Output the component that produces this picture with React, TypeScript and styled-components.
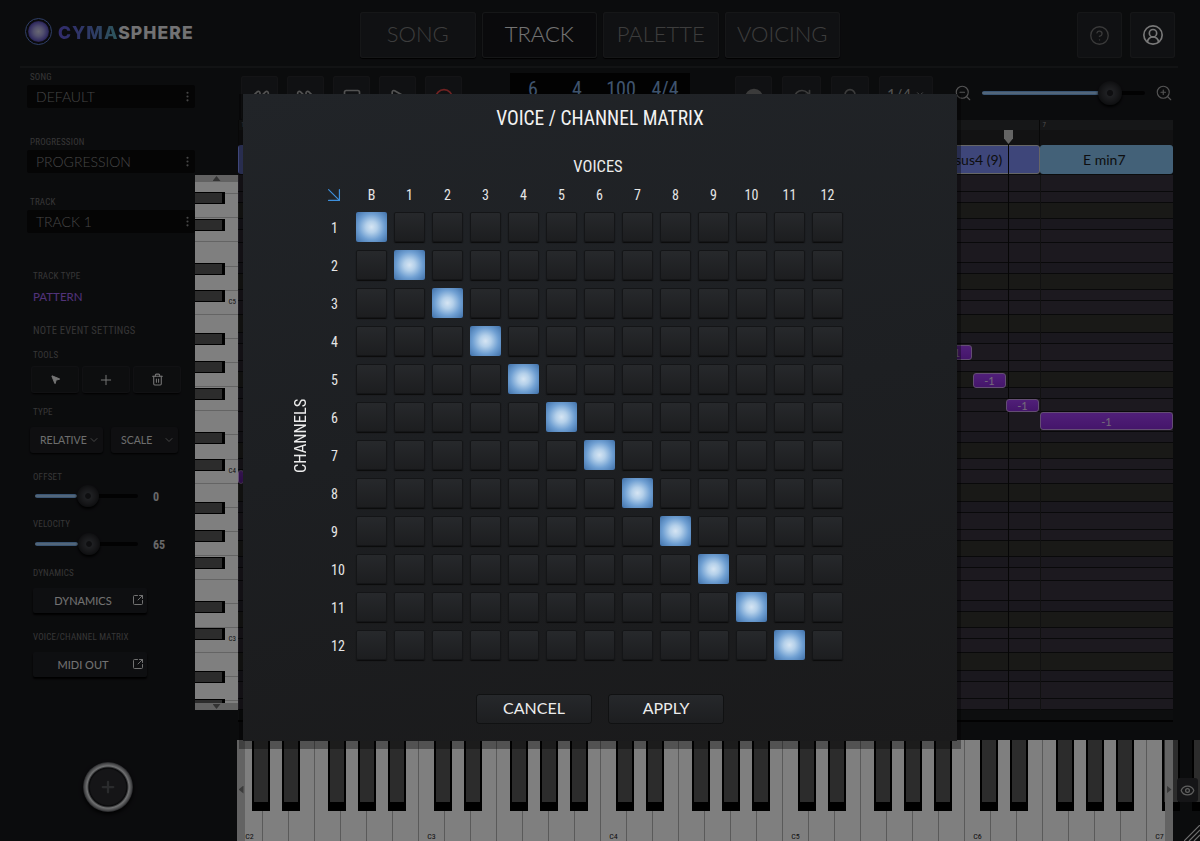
import React, { FC } from 'react';
import styled, { createGlobalStyle } from 'styled-components';
import {
  ArrowDownRight, Bell, ChevronDown, Circle, CircleHelp, CircleUserRound, EllipsisVertical, Eye,
  FastForward, MousePointer2, Play, Plus, RotateCw, Rewind, SquareArrowOutUpRight, Square, Trash2, ZoomIn, ZoomOut,
} from 'lucide-react';

const CONDENSED = `"Liberation Sans Narrow", "Roboto Condensed", Roboto, sans-serif`;
const ROUND = `Lato, "Noto Sans", sans-serif`;

const GlobalStyle = createGlobalStyle`
  html, body { margin: 0; padding: 0; background: #0b0c0d; }
  * { box-sizing: border-box; }
`;

const Page = styled.div`
  position: relative;
  width: 1200px;
  height: 841px;
  overflow: hidden;
  display: flex;
  flex-direction: column;
  background: #17181b;
  font-family: ${ROUND};
`;

const Scrim = styled.div`
  position: absolute;
  z-index: 2;
  inset: 0;
  background: rgba(0, 0, 0, 0.5);
`;

/* header */
const Header = styled.header`
  height: 68px;
  margin: 0 22px 0 20px;
  padding: 12px 3px 9px 5px;
  display: flex;
  border-bottom: 2px solid #252629;
`;

const Logo = styled.div`
  width: 335px;
  display: flex;
  align-items: flex-start;
  gap: 6px;
  padding-top: 6px;
`;

const LogoOrb = styled.div`
  width: 27px;
  height: 27px;
  border-radius: 50%;
  border: 1px solid #5f7fd0;
  padding: 2px;
  background: #141418;
  &::after {
    content: '';
    display: block;
    width: 100%;
    height: 100%;
    border-radius: 50%;
    background: radial-gradient(circle closest-side, #d0cee6 0%, #a6a2dc 45%, #6a60c4 85%, #4a42a0 100%);
  }
`;

const LogoText = styled.div`
  font-family: Inter, sans-serif;
  font-size: 17.5px;
  font-weight: 800;
  line-height: 29px;
  letter-spacing: 1.1px;
  color: #e4e4e6;
  span {
    background: linear-gradient(90deg, #6357d8, #5c78c8 60%, #5cb0b8);
    -webkit-background-clip: text;
    background-clip: text;
    color: transparent;
  }
`;

const Tabs = styled.nav`
  display: flex;
  gap: 6px;
`;

const Tab = styled.div<{ $active?: boolean }>`
  width: 115.5px;
  height: 46px;
  padding-bottom: 3px;
  display: flex;
  align-items: center;
  justify-content: center;
  font-size: 22px;
  font-weight: 300;
  border-radius: 3px;
  color: ${(p) => (p.$active ? '#e8e8e8' : '#7a7a7a')};
  background: ${(p) => (p.$active ? '#141518' : '#212327')};
  box-shadow: inset 0 0 0 1px #2d2e31, 0 1px 1px #000;
`;

const HeaderIcons = styled.div`
  margin-left: auto;
  display: flex;
  gap: 8px;
`;

const IconTab = styled.div<{ $bright?: boolean }>`
  width: 45px;
  height: 46px;
  display: flex;
  align-items: center;
  justify-content: center;
  border-radius: 3px;
  background: #212327;
  box-shadow: inset 0 0 0 1px #2d2e31;
  color: ${(p) => (p.$bright ? '#f0f0f0' : '#757575')};
`;

/* page body */
const Body = styled.div`
  flex: 1;
  display: flex;
`;

const Sidebar = styled.aside`
  width: 195px;
  padding-left: 27px;
  display: flex;
  flex-direction: column;
`;

const Label = styled.div<{ $mt: number; $ml?: number }>`
  margin-top: ${(p) => p.$mt}px;
  margin-left: ${(p) => p.$ml ?? 6}px;
  font-family: ${CONDENSED};
  font-size: 9px;
  line-height: 10px;
  letter-spacing: 0.2px;
  color: #6e6e6e;
  white-space: nowrap;
`;

const SelectBox = styled.div`
  margin-top: 3px;
  height: 23px;
  padding: 0 1px 0 9px;
  display: flex;
  align-items: center;
  justify-content: space-between;
  background: #0a0a0a;
  border-radius: 2px;
  font-size: 14px;
  font-weight: 300;
  color: #8d8d8d;
`;

const PatternText = styled.div`
  margin: 9px 0 0 6px;
  font-size: 11.5px;
  line-height: 14px;
  font-weight: 400;
  color: #a466f0;
`;

const SectionTitle = styled.div`
  margin: 21px 0 0 6px;
  font-family: ${CONDENSED};
  font-size: 10.5px;
  line-height: 12px;
  letter-spacing: 0.2px;
  color: #6c6c6c;
`;

const ToolRow = styled.div`
  margin: 7px 0 0 5px;
  display: flex;
  gap: 5px;
`;

const ToolButton = styled.div`
  width: 46px;
  height: 25px;
  display: flex;
  align-items: center;
  justify-content: center;
  color: #e8e8e8;
  background: #1b1c1f;
  border-radius: 2px;
  box-shadow: 0 0 0 1px #222327, 0 2px 2px #000;
`;

const DropRow = styled.div`
  margin: 10px 0 0 3px;
  display: flex;
  gap: 8px;
`;

const Dropdown = styled.div<{ $w: number }>`
  width: ${(p) => p.$w}px;
  height: 26px;
  padding: 0 3px 0 10px;
  display: flex;
  align-items: center;
  justify-content: space-between;
  font-size: 10.5px;
  color: #dcdcdc;
  background: #1e1f23;
  border-radius: 3px;
  box-shadow: 0 1px 2px #000;
  svg {
    flex: none;
    color: #8a8a8a;
  }
`;

const SliderRow = styled.div<{ $mt: number }>`
  margin: ${(p) => p.$mt}px 0 0 8px;
  height: 20px;
  display: flex;
  align-items: center;
`;

const SliderTrack = styled.div`
  position: relative;
  height: 4px;
  background: #050505;
  border-radius: 2px;
`;

const SliderFill = styled.div`
  height: 100%;
  border-radius: 2px;
  background: linear-gradient(180deg, #5d9ae0, #bcdcf8 50%, #5d9ae0);
`;

const SliderKnob = styled.div<{ $size: number }>`
  position: absolute;
  top: 50%;
  width: ${(p) => p.$size}px;
  height: ${(p) => p.$size}px;
  transform: translate(-50%, -50%);
  border-radius: 50%;
  background: radial-gradient(circle closest-side, #1c1d20 0 22%, #3e4045 30%, #2d2e32 70%, #1d1e21 100%);
  box-shadow: 0 2px 3px #000;
`;

const SliderValue = styled.div`
  margin: 2px 0 0 15px;
  font-family: ${CONDENSED};
  font-size: 12px;
  font-weight: 700;
  color: #d0d0d0;
`;

const WideButton = styled.div`
  position: relative;
  margin: 10px 0 0 6px;
  width: 114px;
  height: 25px;
  padding-right: 14px;
  display: flex;
  align-items: center;
  justify-content: center;
  font-size: 11px;
  color: #e4e4e4;
  background: #1d1f22;
  border-radius: 2px;
  box-shadow: 0 2px 2px #000;
  svg {
    position: absolute;
    right: 3px;
    top: 6px;
  }
`;

const AddButton = styled.div`
  margin: 85px 0 0 56px;
  width: 50px;
  height: 50px;
  display: flex;
  align-items: center;
  justify-content: center;
  border-radius: 50%;
  color: #55565a;
  background: radial-gradient(circle closest-side, #2a2b2e 0 70%, #101114 76%, #e2e4e6 84%, #8f9093 94%, #44454a 100%);
  box-shadow: 0 2px 4px #000;
`;

/* main column */
const Main = styled.main`
  width: 978px;
  display: flex;
  flex-direction: column;
`;

const Toolbar = styled.div`
  height: 52px;
  padding: 5px 0 0 46px;
  display: flex;
  align-items: flex-start;
`;

const TransportGroup = styled.div<{ $gap: number }>`
  margin-top: 3px;
  display: flex;
  gap: ${(p) => p.$gap}px;
`;

const TransportButton = styled.div<{ $w?: number; $color?: string }>`
  width: ${(p) => p.$w ?? 37}px;
  height: 44px;
  display: flex;
  align-items: center;
  justify-content: center;
  gap: 4px;
  font-size: 15px;
  color: ${(p) => p.$color ?? '#a5a5a5'};
  background: #212327;
  border-radius: 3px;
  box-shadow: inset 0 0 0 1px #29292c;
`;

const StepButton = styled(TransportButton)`
  padding-bottom: 8px;
`;

const Readout = styled.div`
  width: 180px;
  height: 42px;
  margin: 0 45px 0 48px;
  padding: 4px 0 0 1px;
  display: flex;
  background: #050505;
  font-family: ${CONDENSED};
  font-size: 20px;
  color: #7fa8dc;
  span {
    width: 44px;
    text-align: center;
  }
`;

const ZoomGroup = styled.div`
  margin: 11px 0 0 21px;
  display: flex;
  align-items: center;
  gap: 10px;
  color: #a8a8a8;
`;

const Editor = styled.div`
  height: 590px;
  display: flex;
`;

const PianoSlot = styled.div`
  width: 43px;
  padding-top: 55px;
  flex: none;
`;

const Piano = styled.div`
  position: relative;
  height: 535px;
  overflow: hidden;
  background: #fdfdfd;
`;

const PianoWhite = styled.div`
  height: 24.14px;
  padding: 7px 2px 0 0;
  text-align: right;
  font-family: ${CONDENSED};
  font-size: 7px;
  line-height: 8px;
  color: #222;
  background: #fff;
  border-bottom: 1px solid #c9c9c9;
  &:first-child { margin-top: -5px; }
`;

const PianoBlack = styled.div`
  position: absolute;
  left: 0;
  width: 30px;
  background: #585858;
  border-right: 3px solid #000;
  border-bottom: 1px solid #000;
  border-top: 1px solid #000;
`;

const PianoArrow = styled.div<{ $bottom?: boolean }>`
  position: absolute;
  left: 0;
  right: 0;
  ${(p) => (p.$bottom ? 'bottom: 0;' : 'top: 0;')}
  height: 7px;
  display: flex;
  align-items: center;
  justify-content: center;
  background: #c5c5c5;
  &::after {
    content: '';
    width: 8px;
    height: 5px;
    background: #666;
    clip-path: ${(p) => (p.$bottom ? 'polygon(0 0, 100% 0, 50% 100%)' : 'polygon(50% 0, 100% 100%, 0 100%)')};
  }
`;

const Roll = styled.div`
  position: relative;
  flex: 1;
  display: flex;
  flex-direction: column;
`;

const Ruler = styled.div`
  height: 25px;
  display: flex;
  background: linear-gradient(180deg, #2d2e30 0 40%, #242526 40% 100%);
`;

const RulerBar = styled.div`
  flex: 1;
  padding-left: 2px;
  font-family: ${CONDENSED};
  font-size: 7px;
  line-height: 10px;
  color: #999;
  border-left: 1px solid #111;
`;

const ChordStrip = styled.div`
  height: 30px;
  display: flex;
  padding-bottom: 1px;
  background: #17181a;
`;

const Chord = styled.div<{ $color: string; $selected?: boolean }>`
  flex: 1;
  padding-right: 4px;
  display: flex;
  align-items: center;
  justify-content: center;
  font-size: 14px;
  color: #1b1b20;
  border-radius: 3px;
  background: ${(p) => p.$color};
  border: ${(p) => (p.$selected ? '1px solid #ccc' : '0')};
`;

const NoteArea = styled.div`
  position: relative;
  height: 535px;
  overflow: hidden;
`;

const NoteRow = styled.div<{ $black: boolean }>`
  background: ${(p) => (p.$black ? '#35303c' : '#33332f')};
  border-bottom: 1px solid #121214;
  &:nth-child(4n + 1), &:nth-child(4n + 2) { background: ${(p) => (p.$black ? '#38323f' : '#39333f')}; }
`;

const Note = styled.div`
  position: absolute;
  z-index: 1;
  display: flex;
  align-items: center;
  justify-content: center;
  font-size: 11px;
  color: #e8d8f4;
  background: linear-gradient(180deg, #a13ff2, #8a2cd6);
  border: 1px solid #c79be6;
  border-radius: 3px;
`;

const BarLine = styled.div`
  position: absolute;
  top: 0;
  bottom: 0;
  width: 1px;
  background: #222;
`;

const Playhead = styled.div`
  position: absolute;
  left: 770px;
  top: 10px;
  bottom: 0;
  width: 1px;
  background: #0c0c0c;
  &::before {
    content: '';
    position: absolute;
    left: -4px;
    top: 0;
    width: 9px;
    height: 14px;
    background: #c8c8c8;
    clip-path: polygon(0 0, 100% 0, 100% 60%, 50% 100%, 0 60%);
  }
`;

const ScrollBar = styled.div`
  margin-left: 43px;
  height: 12px;
  border-bottom: 2px solid #050505;
  background: #1b1c1e;
`;

const Keyboard = styled.div`
  position: relative;
  margin: 18px 0 0 42px;
  height: 101px;
  display: flex;
`;

const WhiteKey = styled.div`
  position: relative;
  width: 26px;
  flex: none;
  background: #fff;
  border-right: 1px solid #b4b4b4;
  font-family: ${CONDENSED};
  font-size: 8px;
  color: #222;
  span {
    position: absolute;
    left: 0;
    right: 0;
    bottom: 0;
    text-align: center;
  }
`;

const BlackKey = styled.div`
  position: absolute;
  top: 0;
  width: 18px;
  height: 71px;
  background: #595959;
  border: solid #000;
  border-width: 0 2px 9px 2px;
`;

const KeyboardEdge = styled.div<{ $right?: boolean }>`
  position: absolute;
  top: 0;
  bottom: 0;
  ${(p) => (p.$right ? 'right: 0;' : 'left: 0;')}
  width: 8px;
  display: flex;
  align-items: center;
  justify-content: center;
  padding-bottom: 2px;
  background: #c6c6c6;
  &::after {
    content: '';
    width: 5px;
    height: 8px;
    background: #777;
    clip-path: ${(p) => (p.$right ? 'polygon(0 0, 100% 50%, 0 100%)' : 'polygon(100% 0, 100% 100%, 0 50%)')};
  }
`;

const EyeButton = styled.div`
  position: absolute;
  left: 1177px;
  top: 778px;
  width: 21px;
  height: 24px;
  display: flex;
  align-items: center;
  justify-content: center;
  color: #c0c0c0;
  background: #2a2b2e;
  border-radius: 3px;
`;

const Grip = styled.svg`
  position: absolute;
  right: 0;
  bottom: 0;
`;

/* dialog */
const Modal = styled.section`
  position: absolute;
  z-index: 3;
  left: 243px;
  top: 94px;
  width: 714px;
  height: 647px;
  display: flex;
  flex-direction: column;
  align-items: center;
  padding-top: 13px;
  background: linear-gradient(170deg, #212428 0%, #1d1f22 50%, #1a1a1b 100%);
  box-shadow: 0 4px 0 4px rgba(0, 0, 0, 0.35);
`;

const ModalTitle = styled.h1`
  margin: 0;
  font-family: ${CONDENSED};
  font-size: 19.5px;
  line-height: 24px;
  font-weight: 400;
  color: #f2f2f2;
`;

const VoicesHeading = styled.div`
  margin: 26px 4px 0 0;
  font-family: ${CONDENSED};
  font-size: 16.5px;
  line-height: 20px;
  color: #ececec;
`;

const MatrixRow = styled.div`
  align-self: flex-start;
  margin: 8px 0 0 47px;
  display: flex;
  align-items: flex-end;
  gap: 9px;
`;

const ChannelsHeading = styled.div`
  width: 20px;
  height: 448px;
  display: flex;
  align-items: center;
  justify-content: center;
  writing-mode: vertical-rl;
  transform: rotate(180deg);
  font-family: ${CONDENSED};
  font-size: 16.5px;
  color: #ececec;
`;

const Matrix = styled.div`
  display: grid;
  grid-template-columns: 30px repeat(13, 31px);
  grid-template-rows: 19px repeat(12, 30px);
  column-gap: 7px;
  row-gap: 8px;
`;

const AxisLabel = styled.div`
  display: flex;
  align-items: center;
  justify-content: center;
  font-family: ${CONDENSED};
  font-size: 14px;
  color: #e6e6e6;
  svg { flex: none; }
`;

const RowLabel = styled(AxisLabel)`
  justify-content: flex-start;
  padding: 2px 0 0 12px;
`;

const Cell = styled.div<{ $on: boolean }>`
  border-radius: 2px;
  background: ${(p) =>
    p.$on
      ? 'radial-gradient(circle, #d6e5f3 0%, #b4d0ea 26%, #6f9fd2 60%, #3e6fa8 100%)'
      : 'linear-gradient(180deg, #27292c, #1c1d1f)'};
  box-shadow: ${(p) => (p.$on ? 'none' : 'inset 0 0 0 1px #141517, 0 1px 1px #0a0a0a')};
`;

const ModalActions = styled.div`
  margin-top: 35px;
  display: flex;
  gap: 18px;
`;

const ActionButton = styled.div`
  width: 114px;
  height: 28px;
  padding-bottom: 3px;
  display: flex;
  align-items: center;
  justify-content: center;
  font-size: 16px;
  color: #ececec;
  background: linear-gradient(180deg, #26282b, #1d1e20);
  border-radius: 3px;
  box-shadow: 0 0 0 1px #101112;
`;

// row heights of one octave, top row first (A down to B of the next octave)
const OCTAVE = [
  { h: 17, black: false }, { h: 11, black: true }, { h: 16, black: false }, { h: 11, black: true },
  { h: 13, black: false }, { h: 20, black: false }, { h: 11, black: true }, { h: 16, black: false },
  { h: 11, black: true }, { h: 14, black: false }, { h: 18, black: false }, { h: 11, black: true },
];

const ROWS = Array.from({ length: 38 }, (_, i) => OCTAVE[i % 12]);
const rowTop = (i: number) => ROWS.slice(0, i).reduce((sum, r) => sum + r.h, 0);

const PIANO_WHITES = Array.from({ length: 23 }, (_, i) => {
  const names = ['A', 'G', 'F', 'E', 'D', 'C', 'B'];
  const name = names[i % 7];
  const octave = 5 - Math.floor(i / 7);
  return name === 'C' ? `C${octave}` : '';
});

const BLACK_OFFSETS = [15, 45, 91, 121, 151];
const KEY_BLACKS = Array.from({ length: 6 }, (_, o) => BLACK_OFFSETS.map((x) => x + o * 182)).flat();
KEY_BLACKS.push(15 + 6 * 182);

const CHORDS = [
  { name: '', color: '#7c8cf4' }, { name: '', color: '#7c8cf4' }, { name: '', color: '#86c2f0' },
  { name: '', color: '#7c8cf4' }, { name: '', color: '#86c2f0' },
  { name: 'B7sus4 (9)', color: '#7c8cf4', selected: true }, { name: 'E min7', color: '#86c2f0' },
];

const NOTES = [
  { left: 700, top: 170, w: 34, h: 15 }, { left: 735, top: 198, w: 33, h: 15 },
  { left: 768, top: 224, w: 33, h: 13 }, { left: 802, top: 237, w: 133, h: 18 },
];

const HEADERS = ['B', ...Array.from({ length: 12 }, (_, i) => String(i + 1))];
const ROW_IDS = Array.from({ length: 12 }, (_, i) => i);

const Slider: FC<{ width: number; percent: number; value: string; mt: number }> = ({ width, percent, value, mt }) => (
  <SliderRow $mt={mt}>
    <SliderTrack style={{ width }}>
      <SliderFill style={{ width: `${percent}%` }} />
      <SliderKnob $size={22} style={{ left: `${percent + 10}%` }} />
    </SliderTrack>
    <SliderValue>{value}</SliderValue>
  </SliderRow>
);

const App: FC = () => (
  <Page>
    <GlobalStyle />
    <Header>
      <Logo>
        <LogoOrb />
        <LogoText><span>CYMA</span>SPHERE</LogoText>
      </Logo>
      <Tabs>
        <Tab>SONG</Tab>
        <Tab $active>TRACK</Tab>
        <Tab>PALETTE</Tab>
        <Tab>VOICING</Tab>
      </Tabs>
      <HeaderIcons>
        <IconTab><CircleHelp size={21} strokeWidth={1.5} /></IconTab>
        <IconTab $bright><CircleUserRound size={22} strokeWidth={1.8} /></IconTab>
      </HeaderIcons>
    </Header>

    <Body>
      <Sidebar>
        <Label $mt={4} $ml={3}>SONG</Label>
        <SelectBox>DEFAULT<EllipsisVertical size={13} /></SelectBox>
        <Label $mt={29} $ml={3}>PROGRESSION</Label>
        <SelectBox>PROGRESSION<EllipsisVertical size={13} /></SelectBox>
        <Label $mt={24} $ml={3}>TRACK</Label>
        <SelectBox>TRACK 1<EllipsisVertical size={13} /></SelectBox>
        <Label $mt={38}>TRACK TYPE</Label>
        <PatternText>PATTERN</PatternText>
        <SectionTitle>NOTE EVENT SETTINGS</SectionTitle>
        <Label $mt={13}>TOOLS</Label>
        <ToolRow>
          <ToolButton><MousePointer2 size={11} fill="currentColor" /></ToolButton>
          <ToolButton><Plus size={16} strokeWidth={1.5} /></ToolButton>
          <ToolButton><Trash2 size={13} /></ToolButton>
        </ToolRow>
        <Label $mt={15}>TYPE</Label>
        <DropRow>
          <Dropdown $w={73}>RELATIVE<ChevronDown size={12} /></Dropdown>
          <Dropdown $w={67}>SCALE<ChevronDown size={12} /></Dropdown>
        </DropRow>
        <Label $mt={19}>OFFSET</Label>
        <Slider width={103} percent={41} value="0" mt={4} />
        <Label $mt={13}>VELOCITY</Label>
        <Slider width={103} percent={42} value="65" mt={5} />
        <Label $mt={14}>DYNAMICS</Label>
        <WideButton>DYNAMICS<SquareArrowOutUpRight size={12} /></WideButton>
        <Label $mt={19}>VOICE/CHANNEL MATRIX</Label>
        <WideButton>MIDI OUT<SquareArrowOutUpRight size={12} /></WideButton>
        <AddButton><Plus size={18} strokeWidth={3} /></AddButton>
      </Sidebar>

      <Main>
        <Toolbar>
          <TransportGroup $gap={9}>
            <TransportButton><Rewind size={20} /></TransportButton>
            <TransportButton><FastForward size={20} /></TransportButton>
            <TransportButton><Square size={20} /></TransportButton>
            <TransportButton><Play size={20} /></TransportButton>
            <TransportButton $color="#e04444"><Circle size={20} /></TransportButton>
          </TransportGroup>
          <Readout>
            <span>6</span><span>4</span><span>100</span><span>4/4</span>
          </Readout>
          <TransportGroup $gap={10}>
            <TransportButton $color="#777"><Circle size={20} fill="currentColor" /></TransportButton>
            <TransportButton $w={39} $color="#777"><RotateCw size={20} /></TransportButton>
            <TransportButton $w={38} $color="#777"><Bell size={20} /></TransportButton>
            <StepButton $w={54}>1/4<ChevronDown size={10} /></StepButton>
          </TransportGroup>
          <ZoomGroup>
            <ZoomOut size={18} strokeWidth={1.5} />
            <SliderTrack style={{ width: 163 }}>
              <SliderFill style={{ width: '78%' }} />
              <SliderKnob $size={24} style={{ left: '78.5%' }} />
            </SliderTrack>
            <ZoomIn size={18} strokeWidth={1.5} />
          </ZoomGroup>
        </Toolbar>

        <Editor>
          <PianoSlot>
            <Piano>
              {PIANO_WHITES.map((label, i) => <PianoWhite key={i}>{label}</PianoWhite>)}
              {ROWS.map((row, i) => row.black && (
                <PianoBlack key={i} style={{ top: rowTop(i), height: row.h + 1 }} />
              ))}
              <PianoArrow />
              <PianoArrow $bottom />
            </Piano>
          </PianoSlot>
          <Roll>
            <Ruler>
              {CHORDS.map((_, i) => <RulerBar key={i}>{i === 0 || i === 6 ? i + 1 : ''}</RulerBar>)}
            </Ruler>
            <ChordStrip>
              {CHORDS.map((chord, i) => (
                <Chord key={i} $color={chord.color} $selected={chord.selected}>{chord.name}</Chord>
              ))}
            </ChordStrip>
            <NoteArea>
              {ROWS.map((row, i) => <NoteRow key={i} $black={row.black} style={{ height: row.h }} />)}
              <BarLine style={{ left: 802 }} />
              {NOTES.map((note, i) => (
                <Note key={i} style={{ left: note.left, top: note.top, width: note.w, height: note.h }}>-1</Note>
              ))}
              <Note style={{ left: 0, top: 295, width: 6, height: 14 }} />
            </NoteArea>
            <Playhead />
          </Roll>
        </Editor>
        <ScrollBar />
        <Keyboard>
          {Array.from({ length: 36 }, (_, i) => (
            <WhiteKey key={i}>{i % 7 === 0 && <span>C{2 + i / 7}</span>}</WhiteKey>
          ))}
          {KEY_BLACKS.map((x) => <BlackKey key={x} style={{ left: x }} />)}
          <KeyboardEdge />
          <KeyboardEdge $right />
        </Keyboard>
      </Main>
    </Body>

    <EyeButton><Eye size={15} /></EyeButton>
    <Grip width="16" height="16" viewBox="0 0 16 16" stroke="#ddd" strokeWidth="1.2">
      <path d="M0 16L16 0M5 16L16 5M10 16L16 10" />
    </Grip>
    <Scrim />

    <Modal>
      <ModalTitle>VOICE / CHANNEL MATRIX</ModalTitle>
      <VoicesHeading>VOICES</VoicesHeading>
      <MatrixRow>
        <ChannelsHeading>CHANNELS</ChannelsHeading>
        <Matrix>
          <AxisLabel><ArrowDownRight size={26} color="#3d8fdc" strokeWidth={1.1} /></AxisLabel>
          {HEADERS.map((h) => <AxisLabel key={h}>{h}</AxisLabel>)}
          {ROW_IDS.map((row) => (
            <React.Fragment key={row}>
              <RowLabel>{row + 1}</RowLabel>
              {HEADERS.map((h, col) => <Cell key={h} $on={col === row} />)}
            </React.Fragment>
          ))}
        </Matrix>
      </MatrixRow>
      <ModalActions>
        <ActionButton>CANCEL</ActionButton>
        <ActionButton>APPLY</ActionButton>
      </ModalActions>
    </Modal>
  </Page>
);

export default App;
